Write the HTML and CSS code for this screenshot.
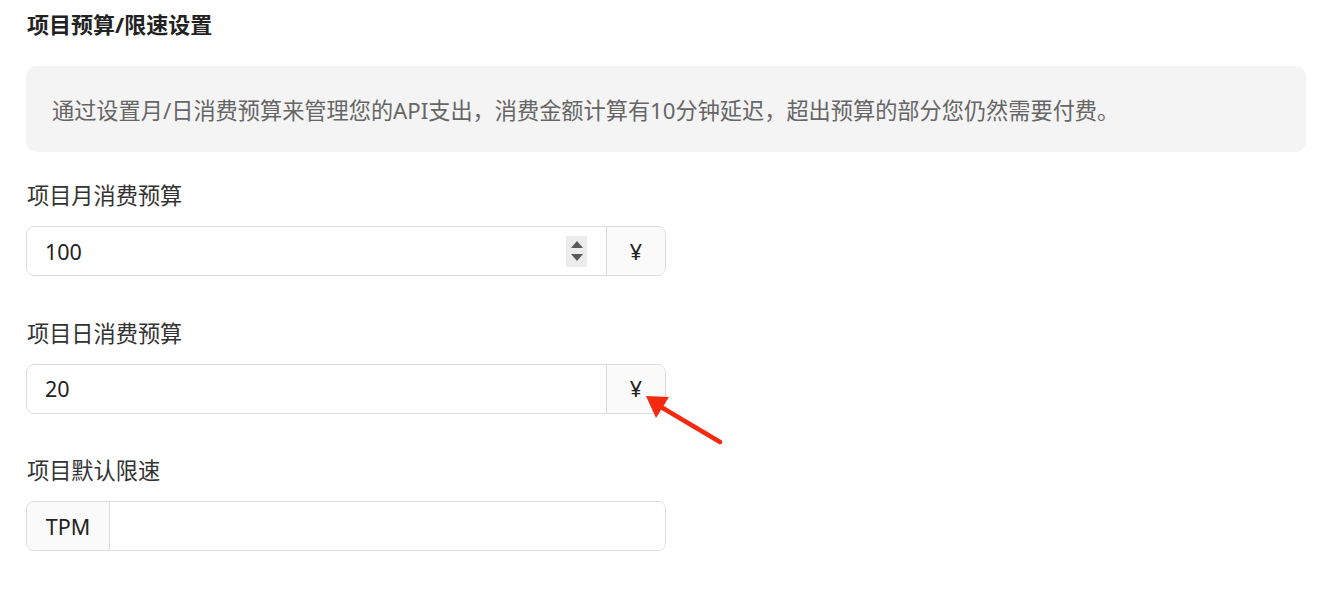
FILE: index.html
```html
<!DOCTYPE html>
<html lang="zh-CN">
<head>
<meta charset="utf-8">
<title>项目预算/限速设置</title>
<link rel="stylesheet" href="styles.css">
</head>
<body>
<div class="page">
  <h2 class="title">项目预算/限速设置</h2>
  <div class="notice">通过设置月/日消费预算来管理您的API支出，消费金额计算有10分钟延迟，超出预算的部分您仍然需要付费。</div>

  <div class="field">
    <label class="label">项目月消费预算</label>
    <div class="group">
      <div class="input">
        <span class="value">100</span>
        <span class="stepper"><i class="up"></i><i class="down"></i></span>
      </div>
      <div class="addon addon-after">¥</div>
    </div>
  </div>

  <div class="field">
    <label class="label">项目日消费预算</label>
    <div class="group">
      <div class="input"><span class="value">20</span></div>
      <div class="addon addon-after">¥</div>
    </div>
  </div>

  <div class="field">
    <label class="label">项目默认限速</label>
    <div class="group">
      <div class="addon addon-before">TPM</div>
      <div class="input"></div>
    </div>
  </div>

  <svg class="arrow" width="90" height="60" viewBox="0 0 90 60">
    <line x1="16" y1="14" x2="80" y2="52" stroke="#f42a10" stroke-width="4.5" stroke-linecap="round"/>
    <polygon points="6,6 29,7 16,28" fill="#f42a10"/>
  </svg>
</div>
</body>
</html>
```

FILE: styles.css
```css
* { box-sizing: border-box; }
html, body { margin: 0; padding: 0; background: #fff; }
body {
  font-family: "Noto Sans", "Noto Sans CJK SC", sans-serif;
  color: #333;
}
.page {
  position: relative;
  padding: 9px 38px 0 26px;
  height: 594px;
}
.title {
  margin: 0;
  font-size: 22px;
  line-height: 30px;
  font-weight: 700;
  color: #222;
  padding-left: 1px;
}
.notice {
  margin-top: 27px;
  height: 86px;
  display: flex;
  align-items: center;
  padding: 0 26px;
  background: #f4f4f4;
  border-radius: 10px;
  font-size: 22.2px;
  color: #666;
}
.field { margin-top: 29px; }
.field + .field { margin-top: 42.5px; }
.label {
  display: block;
  font-size: 22.2px;
  line-height: 30px;
  color: #333;
  padding-left: 1px;
}
.group {
  margin-top: 15px;
  width: 640px;
  height: 50px;
  display: flex;
  border: 1px solid #dcdcdc;
  border-radius: 8px;
  overflow: hidden;
}
.input {
  flex: 1;
  display: flex;
  align-items: center;
  padding: 0 18px;
  background: #fff;
}
.value {
  flex: 1;
  font-size: 21.5px;
  color: #222;
}
.stepper {
  width: 21px;
  height: 31px;
  margin-right: 1px;
  background: #ececec;
  display: flex;
  flex-direction: column;
  align-items: center;
  justify-content: center;
  gap: 6px;
}
.stepper i {
  width: 0;
  height: 0;
  border-left: 6px solid transparent;
  border-right: 6px solid transparent;
}
.stepper .up { border-bottom: 7px solid #5a5a5a; }
.stepper .down { border-top: 7px solid #5a5a5a; }
.addon {
  display: flex;
  align-items: center;
  justify-content: center;
  background: #fafafa;
  font-size: 21.5px;
  color: #222;
}
.addon-after { width: 59px; border-left: 1px solid #dcdcdc; }
.addon-before { width: 83px; border-right: 1px solid #dcdcdc; }
.arrow {
  position: absolute;
  left: 640px;
  top: 390px;
}
```
